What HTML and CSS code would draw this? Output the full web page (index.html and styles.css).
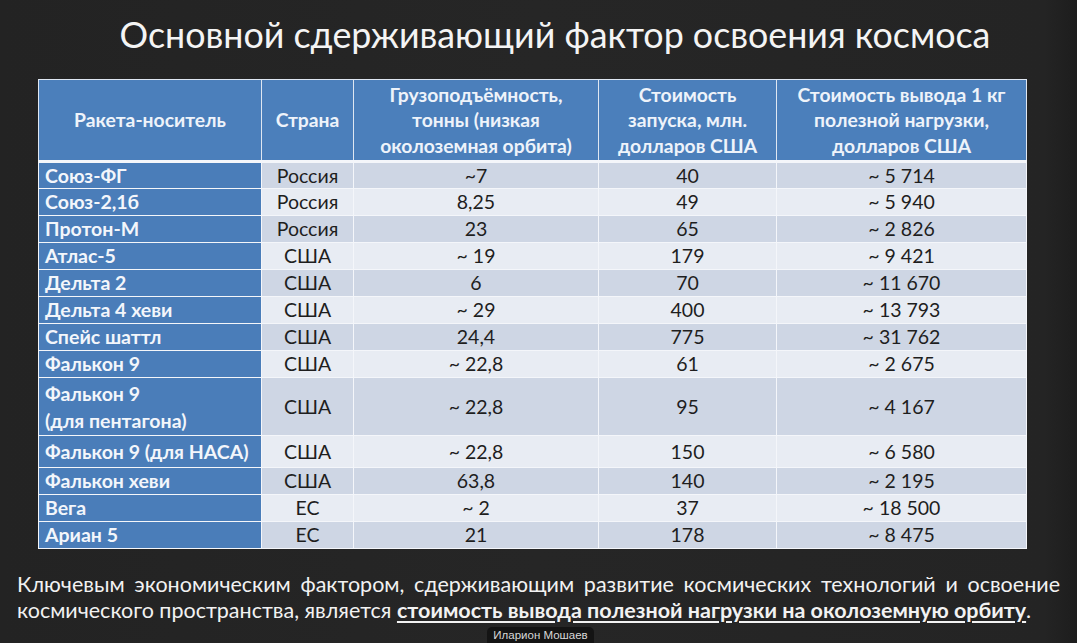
FILE: index.html
```html
<!DOCTYPE html>
<html lang="ru">
<head>
<meta charset="utf-8">
<title>Основной сдерживающий фактор освоения космоса</title>
<link rel="stylesheet" href="styles.css">
</head>
<body>
<div class="slide">
  <h1 class="title">Основной сдерживающий фактор освоения космоса</h1>
  <table class="rockets">
    <colgroup>
      <col class="c1"><col class="c2"><col class="c3"><col class="c4"><col class="c5">
    </colgroup>
    <thead>
      <tr>
        <th>Ракета-носитель</th>
        <th>Страна</th>
        <th>Грузоподъёмность,<br>тонны (низкая<br>околоземная орбита)</th>
        <th>Стоимость<br>запуска, млн.<br>долларов США</th>
        <th>Стоимость вывода 1 кг<br>полезной нагрузки,<br>долларов США</th>
      </tr>
    </thead>
    <tbody>
      <tr class="odd"><td class="name">Союз-ФГ</td><td>Россия</td><td>~7</td><td>40</td><td>~ 5 714</td></tr>
      <tr class="even"><td class="name">Союз-2,1б</td><td>Россия</td><td>8,25</td><td>49</td><td>~ 5 940</td></tr>
      <tr class="odd"><td class="name">Протон-М</td><td>Россия</td><td>23</td><td>65</td><td>~ 2 826</td></tr>
      <tr class="even"><td class="name">Атлас-5</td><td>США</td><td>~ 19</td><td>179</td><td>~ 9 421</td></tr>
      <tr class="odd"><td class="name">Дельта 2</td><td>США</td><td>6</td><td>70</td><td>~ 11 670</td></tr>
      <tr class="even"><td class="name">Дельта 4 хеви</td><td>США</td><td>~ 29</td><td>400</td><td>~ 13 793</td></tr>
      <tr class="odd"><td class="name">Спейс шаттл</td><td>США</td><td>24,4</td><td>775</td><td>~ 31 762</td></tr>
      <tr class="even"><td class="name">Фалькон 9</td><td>США</td><td>~ 22,8</td><td>61</td><td>~ 2 675</td></tr>
      <tr class="odd tall"><td class="name">Фалькон 9<br>(для пентагона)</td><td>США</td><td>~ 22,8</td><td>95</td><td>~ 4 167</td></tr>
      <tr class="even mid"><td class="name">Фалькон 9 (для НАСА)</td><td>США</td><td>~ 22,8</td><td>150</td><td>~ 6 580</td></tr>
      <tr class="odd"><td class="name">Фалькон хеви</td><td>США</td><td>63,8</td><td>140</td><td>~ 2 195</td></tr>
      <tr class="even"><td class="name">Вега</td><td>ЕС</td><td>~ 2</td><td>37</td><td>~ 18 500</td></tr>
      <tr class="odd"><td class="name">Ариан 5</td><td>ЕС</td><td>21</td><td>178</td><td>~ 8 475</td></tr>
    </tbody>
  </table>
  <p class="note">Ключевым экономическим фактором, сдерживающим развитие космических технологий и освоение космического пространства, является <strong class="em">стоимость вывода полезной нагрузки на околоземную орбиту</strong>.</p>
  <div class="caption-row"><span class="caption">Иларион Мошаев</span></div>
</div>
</body>
</html>
```

FILE: styles.css
```css
* { box-sizing: border-box; }
html, body {
  margin: 0;
  padding: 0;
}
body {
  width: 1077px;
  height: 643px;
  overflow: hidden;
  background: linear-gradient(90deg, #232323 0%, #262626 50%, #242424 97%, #1d1d1d 100%);
  font-family: Lato, "Liberation Sans", sans-serif;
}
.slide {
  display: flex;
  flex-direction: column;
  height: 643px;
}
.title {
  margin: 0;
  height: 79px;
  padding: 13px 0 0 33px;
  text-align: center;
  color: #f4f4f4;
  font-weight: 400;
  font-size: 35.8px;
  line-height: 44px;
}
.rockets {
  margin-left: 38px;
  width: 988px;
  border-collapse: collapse;
  table-layout: fixed;
  font-size: 19.5px;
}
.c1 { width: 223px; }
.c2 { width: 92px; }
.c3 { width: 245px; }
.c4 { width: 178px; }
.c5 { width: 250px; }
.rockets th {
  height: 82px;
  background: #4b7fbb;
  color: #eef3fa;
  font-weight: 700;
  font-size: 19.3px;
  line-height: 25.5px;
  padding: 0;
  text-align: center;
  vertical-align: middle;
  border: 1px solid #dfe7f2;
  border-bottom: 3px solid #f4f6fa;
}
.rockets td {
  height: 27px;
  padding: 0;
  text-align: center;
  vertical-align: middle;
  color: #1e1e1e;
  line-height: 22px;
  border: 1px solid #f4f6fa;
}
.rockets tr.odd td { background: #ced6e4; }
.rockets tr.even td { background: #e8ecf3; }
.rockets tr.tall td { height: 58px; line-height: 27px; }
.rockets tr.mid td { height: 32px; }
.rockets td.name,
.rockets tr.odd td.name,
.rockets tr.even td.name {
  background: #4a7db9;
  color: #f3f6fb;
  font-weight: 700;
  text-align: left;
  padding-left: 6px;
}
.note {
  margin: 22px 0 0;
  padding: 0 17px;
  color: #f2f2f2;
  font-size: 21.5px;
  line-height: 26px;
  text-align: justify;
}
.em {
  font-weight: 700;
  text-decoration: underline;
  text-underline-offset: 3px;
}
.caption-row {
  display: flex;
  justify-content: center;
  margin-top: auto;
}
.caption {
  background: #141414;
  color: #d8d8d8;
  font-family: "Liberation Sans", Arial, sans-serif;
  font-size: 11.5px;
  line-height: 16px;
  padding: 0 6px;
  border-radius: 5px 5px 0 0;
  margin-left: 4px;
}
```
